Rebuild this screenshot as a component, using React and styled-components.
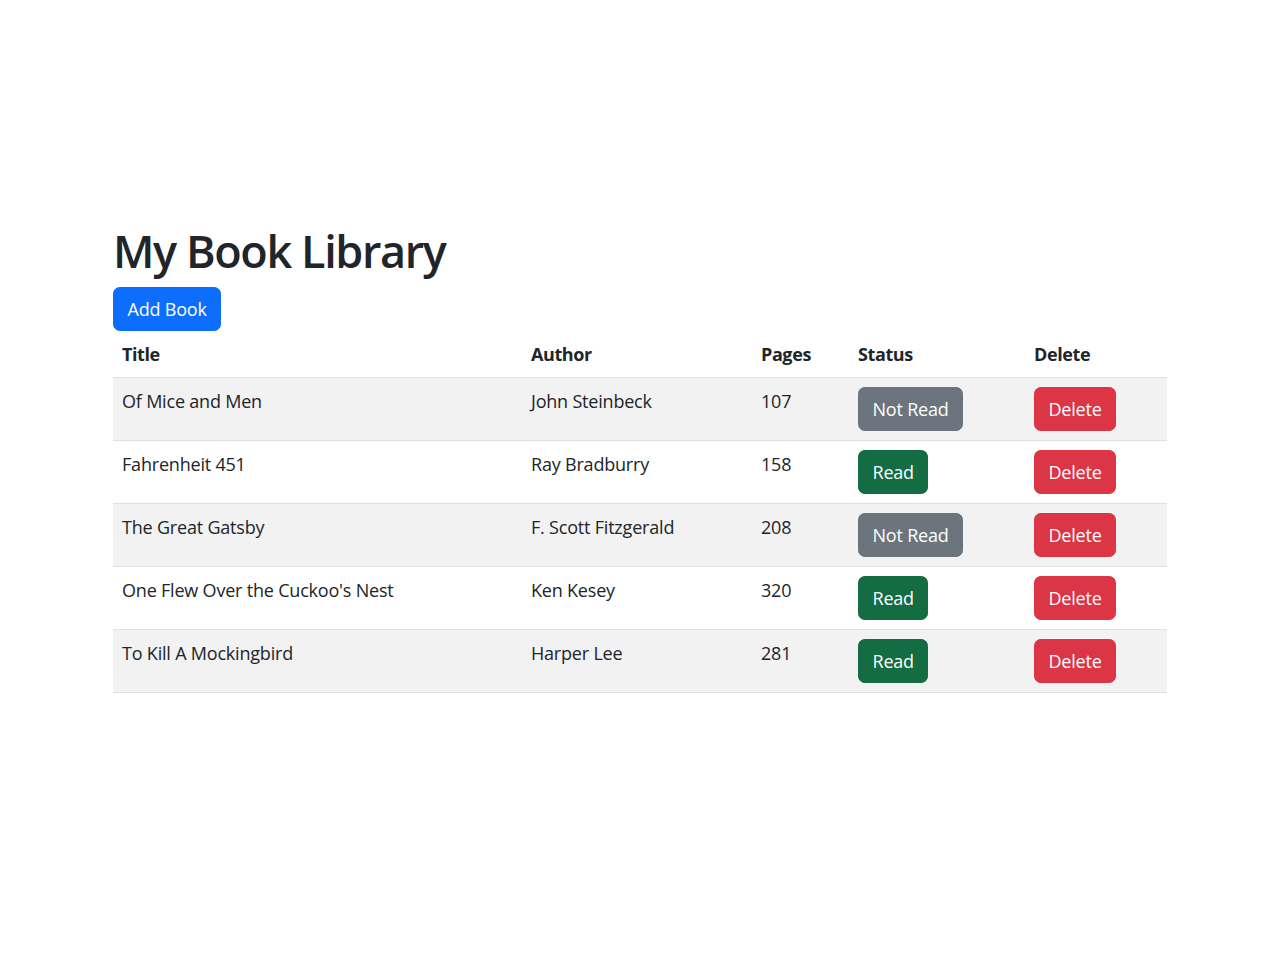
import React from "react";
import styled, { createGlobalStyle } from "styled-components";

const Global = createGlobalStyle`
  * { box-sizing: border-box; }
  body {
    margin: 0;
    background: #fff;
    color: #212529;
    font-family: "Open Sans", "Noto Sans", sans-serif;
    font-size: 18px;
    line-height: 1.5;
  }
`;

const Container = styled.div`
  width: 1080px;
  margin: 0 auto;
  padding: 224px 13px 0;
`;

const Heading = styled.h1`
  margin: 0 0 9px;
  font-size: 45px;
  font-weight: 600;
  line-height: 1.2;
  letter-spacing: -1.4px;
`;

const Button = styled.button`
  display: inline-block;
  font-family: inherit;
  font-size: 18px;
  line-height: 27px;
  padding: 7.5px 13.5px;
  border: 1px solid transparent;
  border-radius: 6.75px;
  color: #fff;
  cursor: pointer;
  letter-spacing: -0.2px;
  background: ${(p) => p.$bg};
  border-color: ${(p) => p.$bg};
`;

const Table = styled.table`
  width: 100%;
  border-collapse: collapse;
  margin-top: 0;
`;

const Th = styled.th`
  text-align: left;
  font-weight: 700;
  padding: 10px 9px 9px;
  border-bottom: 1px solid #dee2e6;
  width: ${(p) => p.$w}px;
  letter-spacing: -0.4px;
`;

const Row = styled.tr`
  background: ${(p) => (p.$striped ? "#f2f2f2" : "#fff")};
`;

const Td = styled.td`
  vertical-align: top;
  padding: 9px 9px;
  border-bottom: 1px solid #dee2e6;
  letter-spacing: -0.2px;
`;

const TextCell = styled.div`
  padding-top: 1px;
`;

const books = [
  { title: "Of Mice and Men", author: "John Steinbeck", pages: 107, read: false },
  { title: "Fahrenheit 451", author: "Ray Bradburry", pages: 158, read: true },
  { title: "The Great Gatsby", author: "F. Scott Fitzgerald", pages: 208, read: false },
  { title: "One Flew Over the Cuckoo's Nest", author: "Ken Kesey", pages: 320, read: true },
  { title: "To Kill A Mockingbird", author: "Harper Lee", pages: 281, read: true },
];

export default function App() {
  return (
    <>
      <Global />
      <Container>
        <Heading>My Book Library</Heading>
        <Button $bg="#0d6efd">Add Book</Button>
        <Table>
          <thead>
            <tr>
              <Th $w={409}>Title</Th>
              <Th $w={230}>Author</Th>
              <Th $w={97}>Pages</Th>
              <Th $w={176}>Status</Th>
              <Th $w={142}>Delete</Th>
            </tr>
          </thead>
          <tbody>
            {books.map((b, i) => (
              <Row key={b.title} $striped={i % 2 === 0}>
                <Td><TextCell>{b.title}</TextCell></Td>
                <Td><TextCell>{b.author}</TextCell></Td>
                <Td><TextCell>{b.pages}</TextCell></Td>
                <Td>
                  <Button $bg={b.read ? "#146c43" : "#6c757d"}>
                    {b.read ? "Read" : "Not Read"}
                  </Button>
                </Td>
                <Td>
                  <Button $bg="#dc3545">Delete</Button>
                </Td>
              </Row>
            ))}
          </tbody>
        </Table>
      </Container>
    </>
  );
}
